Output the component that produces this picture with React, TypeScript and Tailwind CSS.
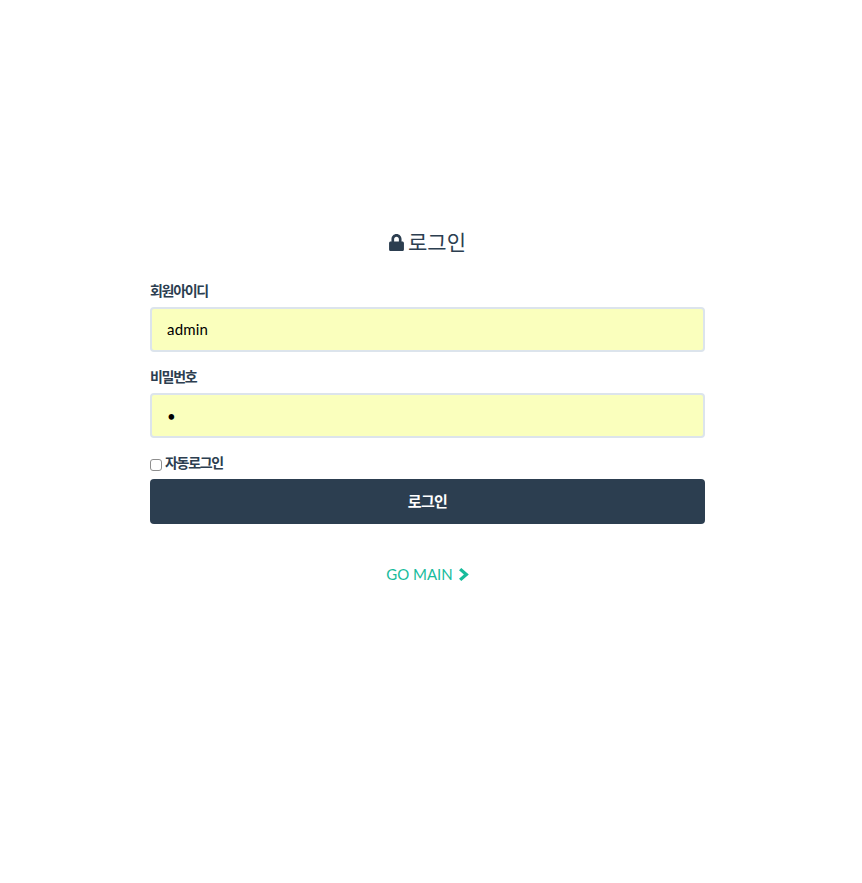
import { FaLock } from "react-icons/fa";

const fontStack = "[font-family:Lato,'Noto_Sans_CJK_KR',sans-serif]";

export default function App() {
  return (
    <main className={`min-h-screen bg-white pt-[228px] text-[#2c3e50] ${fontStack}`}>
      <div className="ml-[150px] w-[555px]">
        <h1 className="mb-[25px] flex h-[28px] items-center justify-center gap-[4px] text-[21px] font-normal leading-[28px]">
          <FaLock className="h-[17px] w-[15px]" />
          <span>로그인</span>
        </h1>

        <form>
          <label className="block">
            <span className="mb-[6px] block text-[14px] font-bold leading-[20px] tracking-[-1.3px]">
              회원아이디
            </span>
            <input
              type="text"
              defaultValue="admin"
              className="block h-[45px] w-full rounded-[4px] border-2 border-[#dce4ec] bg-[#faffbd] px-[15px] pb-[2px] text-[15px] tracking-[0.2px] text-black outline-none"
            />
          </label>

          <label className="mt-[15px] block">
            <span className="mb-[6px] block text-[14px] font-bold leading-[20px] tracking-[-1.3px]">
              비밀번호
            </span>
            <input
              type="password"
              defaultValue="1"
              className="block h-[45px] w-full rounded-[4px] border-2 border-[#dce4ec] bg-[#faffbd] px-[15px] text-[15px] text-black outline-none"
            />
          </label>

          <label className="mt-[15px] flex h-[20px] items-center gap-[3px]">
            <input
              type="checkbox"
              className="m-0 mt-[3px] h-[12px] w-[12px] appearance-none rounded-[3px] border border-[#8e8e8e] bg-white"
            />
            <span className="text-[14px] font-bold leading-[20px] tracking-[-1.3px]">
              자동로그인
            </span>
          </label>

          <button
            type="button"
            className="mt-[6px] block h-[45px] w-full rounded-[4px] bg-[#2c3e50] text-[15px] font-bold tracking-[-0.7px] text-white"
          >
            로그인
          </button>
        </form>

        <div className="mt-[40px] flex h-[21px] items-center justify-center gap-[6px] text-[15px] leading-[21px] text-[#18bc9c]">
          <span>GO MAIN</span>
          <svg viewBox="0 0 10 13" className="h-[13px] w-[10px] fill-current">
            <path d="M0 2.3 2.3 0 9.8 6.5 2.3 13 0 10.7 4.9 6.5Z" />
          </svg>
        </div>
      </div>
    </main>
  );
}
